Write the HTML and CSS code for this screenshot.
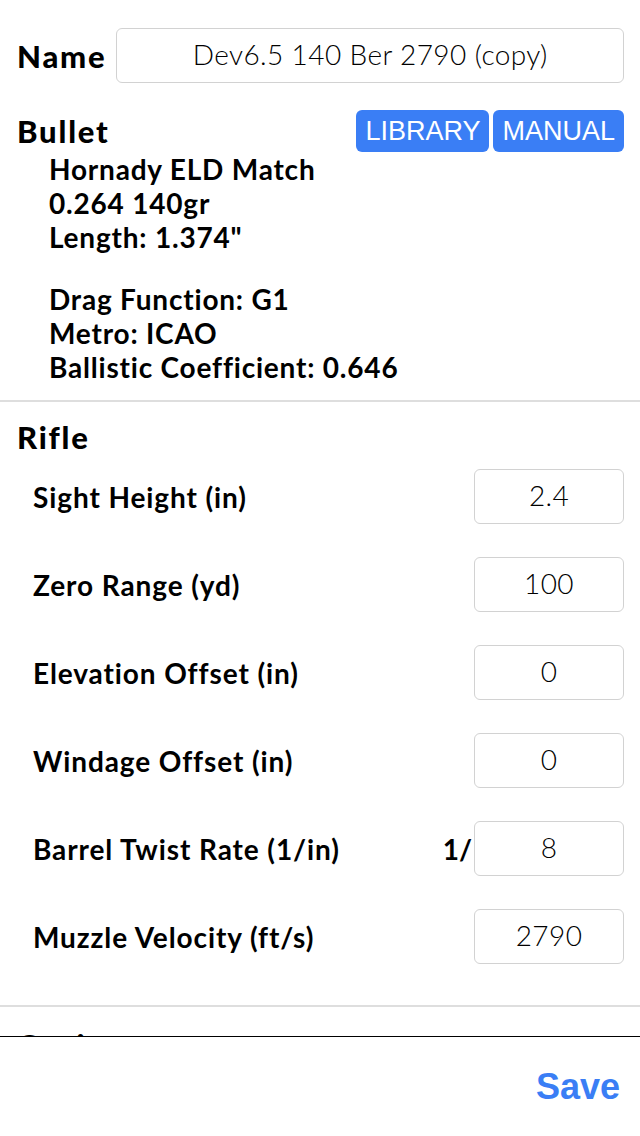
FILE: index.html
```html
<!DOCTYPE html>
<html lang="en">
<head>
    <meta charset="UTF-8" />
    <meta name="viewport" content="width=device-width, initial-scale=1.0" />
    <title>Edit Profile</title>
    <link rel="stylesheet" href="styles.css">
</head>
<body>
    <div class="screen">
        <div class="content">
            <div class="name-row">
                <label class="heading" for="name">Name</label>
                <input type="text" id="name" class="field name-field" value="Dev6.5 140 Ber 2790 (copy)" />
            </div>

            <div class="section">
                <div class="section-head">
                    <h2 class="heading">Bullet</h2>
                    <div class="buttons">
                        <button class="pill">LIBRARY</button>
                        <button class="pill">MANUAL</button>
                    </div>
                </div>
                <div class="info">
                    <p>Hornady ELD Match</p>
                    <p>0.264 140gr</p>
                    <p>Length: 1.374"</p>
                </div>
                <div class="info">
                    <p>Drag Function: G1</p>
                    <p>Metro: ICAO</p>
                    <p>Ballistic Coefficient: 0.646</p>
                </div>
            </div>

            <div class="section rifle">
                <h2 class="heading">Rifle</h2>
                <div class="row">
                    <span class="label">Sight Height (in)</span>
                    <input type="text" class="field small" value="2.4" />
                </div>
                <div class="row">
                    <span class="label">Zero Range (yd)</span>
                    <input type="text" class="field small" value="100" />
                </div>
                <div class="row">
                    <span class="label">Elevation Offset (in)</span>
                    <input type="text" class="field small" value="0" />
                </div>
                <div class="row">
                    <span class="label">Windage Offset (in)</span>
                    <input type="text" class="field small" value="0" />
                </div>
                <div class="row">
                    <span class="label">Barrel Twist Rate (1/in)</span>
                    <span class="prefix">1/</span>
                    <input type="text" class="field small" value="8" />
                </div>
                <div class="row">
                    <span class="label">Muzzle Velocity (ft/s)</span>
                    <input type="text" class="field small" value="2790" />
                </div>
            </div>

            <div class="section optics">
                <h2 class="heading">Optics</h2>
            </div>
        </div>

        <div class="toolbar">
            <button class="save">Save</button>
        </div>
    </div>
</body>
</html>
```

FILE: styles.css
```css
body {
    margin: 0;
    font-family: "Lato", "Noto Sans", sans-serif;
    background-color: #ffffff;
    color: #000000;
}

.screen {
    width: 640px;
    height: 1136px;
    display: flex;
    flex-direction: column;
}

.content {
    height: 1036px;
    overflow: hidden;
}

.heading {
    margin: 0;
    font-size: 31px;
    font-weight: 900;
    line-height: 40px;
    letter-spacing: 1.8px;
}

.name-row {
    display: flex;
    align-items: center;
    gap: 10px;
    padding: 28px 16px 0 17px;
}

.field {
    box-sizing: border-box;
    height: 55px;
    border: 1px solid #d2d2d2;
    border-radius: 6px;
    font-family: "Lato", "Noto Sans", sans-serif;
    font-size: 28px;
    font-weight: 300;
    letter-spacing: 0.4px;
    text-align: center;
    color: #000000;
    background: #ffffff;
    padding: 0 0 4px 0;
}

.name-field {
    flex: 1;
}

.section {
    padding: 0 16px 0 17px;
    border-bottom: 2px solid #dedede;
}

.section-head {
    display: flex;
    justify-content: space-between;
    align-items: center;
    margin-top: 27px;
}

.buttons {
    display: flex;
    gap: 4px;
}

.pill {
    height: 42px;
    padding: 0 9px;
    border: none;
    border-radius: 6px;
    background-color: #3a7ef5;
    color: #ffffff;
    font-family: "Liberation Sans", Arial, sans-serif;
    font-size: 27px;
}

.info {
    padding-left: 32px;
    margin-bottom: 16px;
}

.info + .info {
    margin-top: 28px;
}

.info p {
    margin: 0;
    font-size: 28px;
    font-weight: 700;
    line-height: 34px;
    letter-spacing: 0.8px;
}

.rifle {
    padding-top: 15px;
    padding-bottom: 25px;
}

.rifle .heading {
    margin-bottom: 12px;
}

.row {
    display: flex;
    align-items: center;
    height: 55px;
    margin-bottom: 33px;
    padding-left: 16px;
}

.row:last-child {
    margin-bottom: 16px;
}

.label {
    flex: 1;
    font-size: 28px;
    font-weight: 700;
    letter-spacing: 0.9px;
}

.prefix {
    font-size: 28px;
    font-weight: 700;
    margin-right: 2px;
}

.small {
    width: 150px;
}

.optics {
    border-bottom: none;
    padding-top: 18px;
}

.toolbar {
    height: 99px;
    border-top: 1px solid #000000;
    display: flex;
    justify-content: flex-end;
    align-items: center;
}

.save {
    border: none;
    background: none;
    padding: 0;
    color: #3a7ef5;
    font-family: "Liberation Sans", Arial, sans-serif;
    font-size: 36px;
    font-weight: 700;
    margin-right: 20px;
}
```
